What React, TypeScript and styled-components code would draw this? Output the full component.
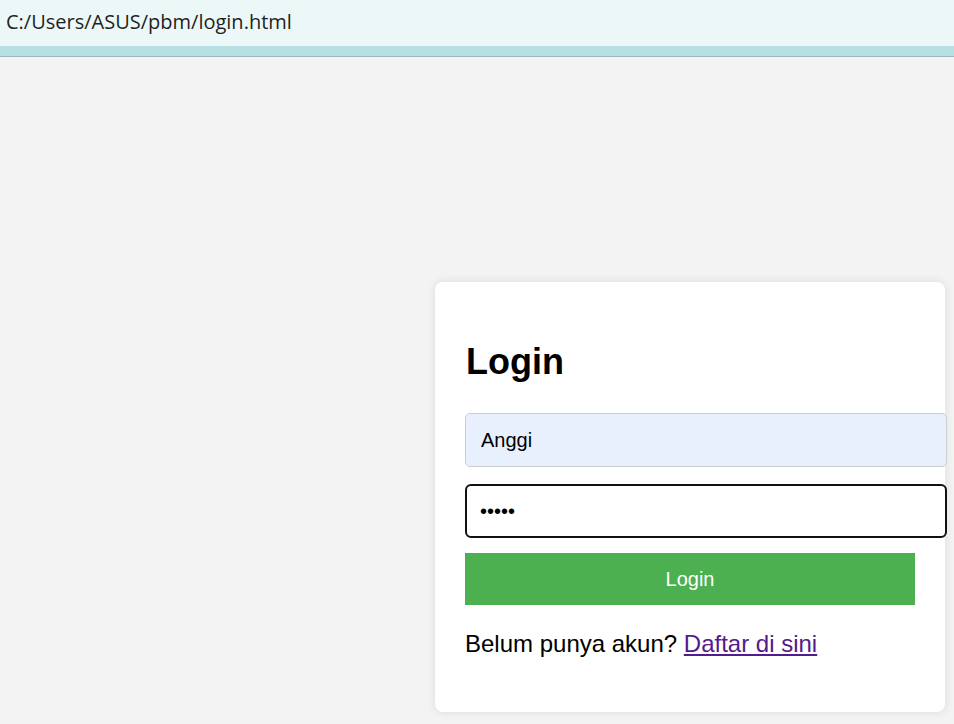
import { useEffect, useRef } from 'react';
import styled, { createGlobalStyle } from 'styled-components';

const GlobalStyle = createGlobalStyle`
    html, body {
        margin: 0;
        padding: 0;
        background: #f3f3f3;
        font-family: 'Liberation Sans', Arial, sans-serif;
    }
`;

export default function App() {
    const passwordRef = useRef<HTMLInputElement>(null);

    // Password field has focus, caret after the last character
    useEffect(() => {
        const el = passwordRef.current;
        if (!el) return;
        el.focus();
        el.setSelectionRange(el.value.length, el.value.length);
    }, []);

    return (
        <>
            <GlobalStyle />
            <AddressBar>
                <Url>C:/Users/ASUS/pbm/login.html</Url>
            </AddressBar>
            <Strip />
            <Page>
                <Card>
                    <Title>Login</Title>
                    <Form onSubmit={e => e.preventDefault()}>
                        <Field type="text" defaultValue="Anggi" autofilled />
                        <Field ref={passwordRef} type="password" defaultValue="12345" focused />
                        <Button type="submit">Login</Button>
                    </Form>
                    <Footer>
                        Belum punya akun? <Link href="#">Daftar di sini</Link>
                    </Footer>
                </Card>
            </Page>
        </>
    );
}

// Styled components
const AddressBar = styled.div`
    height: 46px;
    background: #ecf8f8;
    display: flex;
    align-items: center;
    padding-left: 6px;
`;

const Url = styled.span`
    font-family: 'Open Sans', 'Noto Sans', sans-serif;
    font-size: 20px;
    color: #1f1f1f;
    margin-top: -4px;
`;

const Strip = styled.div`
    height: 10px;
    background: #b8dfe4;
    border-bottom: 1px solid #9cb9c0;
`;

const Page = styled.main`
    display: flex;
    padding: 225px 0 12px 435px;
`;

const Card = styled.div`
    width: 450px;
    padding: 30px;
    background: #fff;
    border-radius: 8px;
    box-shadow: 0 0 10px rgba(0, 0, 0, 0.1);
`;

const Title = styled.h2`
    font-size: 36px;
    line-height: 43px;
    font-weight: 700;
    color: #000;
    margin: 28px 0 30px 1px;
`;

const Form = styled.form`
    display: flex;
    flex-direction: column;
    align-items: flex-start;
`;

const Field = styled.input<{ autofilled?: boolean; focused?: boolean }>`
    box-sizing: border-box;
    width: 482px;
    height: 54px;
    margin-bottom: ${({ focused }) => (focused ? '15px' : '17px')};
    padding: 0 ${({ focused }) => (focused ? '13px' : '15px')};
    font-family: 'Liberation Sans', Arial, sans-serif;
    font-size: 20px;
    color: #000;
    caret-color: #000;
    background: ${({ autofilled }) => (autofilled ? '#e8f0fe' : '#fff')};
    border: ${({ focused }) => (focused ? '2px solid #111' : '1px solid #ccc')};
    border-radius: ${({ focused }) => (focused ? '6px' : '5px')};
    outline: none;
`;

const Button = styled.button`
    width: 450px;
    height: 52px;
    border: none;
    background: #4caf50;
    color: #fff;
    font-family: 'Liberation Sans', Arial, sans-serif;
    font-size: 20px;
    cursor: pointer;
`;

const Footer = styled.p`
    font-size: 24px;
    line-height: 29px;
    color: #000;
    margin: 24px 0 24px;
`;

const Link = styled.a`
    color: #551a8b;
    text-decoration: underline;
`;
